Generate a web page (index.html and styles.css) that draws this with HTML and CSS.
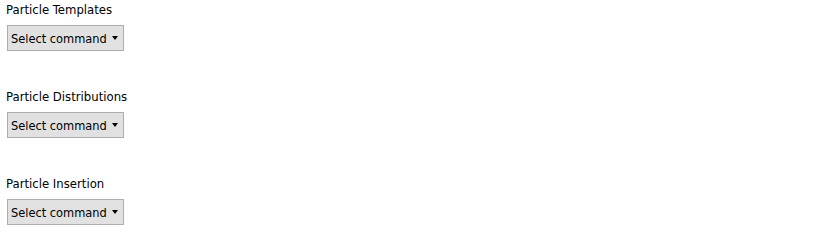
FILE: index.html
```html
<!DOCTYPE html>
<html lang="en">
<head>
    <meta charset="UTF-8">
    <title>Particles</title>
    <link rel="stylesheet" href="styles.css">
</head>
<body>
    <div class="group">
        <div class="label">Particle Templates</div>
        <button class="cmd">Select command <span class="caret"></span></button>
    </div>
    <div class="group">
        <div class="label">Particle Distributions</div>
        <button class="cmd">Select command <span class="caret"></span></button>
    </div>
    <div class="group">
        <div class="label">Particle Insertion</div>
        <button class="cmd">Select command <span class="caret"></span></button>
    </div>
</body>
</html>
```

FILE: styles.css
```css
body {
    margin: 0;
    padding: 2px 0 0 6px;
    font-family: "DejaVu Sans Condensed", "DejaVu Sans", Tahoma, sans-serif;
    font-size: 13px;
    color: #000;
    background: #fff;
}
.group {
    height: 87px;
}
.group:last-child {
    height: auto;
}
.label {
    line-height: 16px;
    margin-bottom: 7px;
}
.cmd {
    display: flex;
    align-items: center;
    gap: 5px;
    margin-left: 1px;
    height: 26px;
    padding: 0 5px 0 3px;
    font-family: inherit;
    font-size: 12.7px;
    color: #000;
    background: #e1e1e1;
    border: 1px solid #adadad;
    border-radius: 0;
}
.caret {
    width: 0;
    height: 0;
    border-left: 3.5px solid transparent;
    border-right: 3.5px solid transparent;
    border-top: 4px solid #000;
}
```
